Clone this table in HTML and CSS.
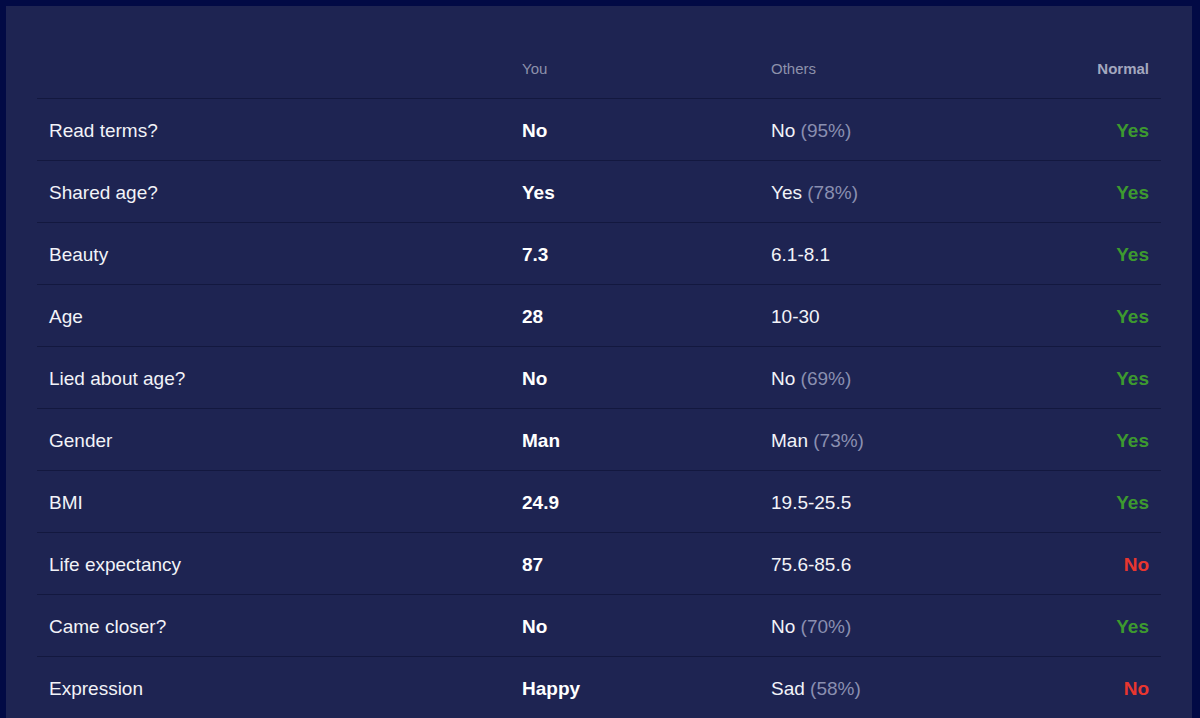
FILE: index.html
```html
<!DOCTYPE html>
<html>
<head>
<meta charset="utf-8">
<link rel="stylesheet" href="styles.css">
</head>
<body>
<div class="frame">
  <div class="panel">
    <div class="table">
      <div class="row head">
        <div class="cell"></div>
        <div class="cell">You</div>
        <div class="cell">Others</div>
        <div class="cell norm">Normal</div>
      </div>
      <div class="row"><div class="cell">Read terms?</div><div class="cell you">No</div><div class="cell">No <span class="pct">(95%)</span></div><div class="cell norm yes">Yes</div></div>
      <div class="row"><div class="cell">Shared age?</div><div class="cell you">Yes</div><div class="cell">Yes <span class="pct">(78%)</span></div><div class="cell norm yes">Yes</div></div>
      <div class="row"><div class="cell">Beauty</div><div class="cell you">7.3</div><div class="cell">6.1-8.1</div><div class="cell norm yes">Yes</div></div>
      <div class="row"><div class="cell">Age</div><div class="cell you">28</div><div class="cell">10-30</div><div class="cell norm yes">Yes</div></div>
      <div class="row"><div class="cell">Lied about age?</div><div class="cell you">No</div><div class="cell">No <span class="pct">(69%)</span></div><div class="cell norm yes">Yes</div></div>
      <div class="row"><div class="cell">Gender</div><div class="cell you">Man</div><div class="cell">Man <span class="pct">(73%)</span></div><div class="cell norm yes">Yes</div></div>
      <div class="row"><div class="cell">BMI</div><div class="cell you">24.9</div><div class="cell">19.5-25.5</div><div class="cell norm yes">Yes</div></div>
      <div class="row"><div class="cell">Life expectancy</div><div class="cell you">87</div><div class="cell">75.6-85.6</div><div class="cell norm no">No</div></div>
      <div class="row"><div class="cell">Came closer?</div><div class="cell you">No</div><div class="cell">No <span class="pct">(70%)</span></div><div class="cell norm yes">Yes</div></div>
      <div class="row"><div class="cell">Expression</div><div class="cell you">Happy</div><div class="cell">Sad <span class="pct">(58%)</span></div><div class="cell norm no">No</div></div>
    </div>
  </div>
</div>
</body>
</html>
```

FILE: styles.css
```css
html, body {
  margin: 0;
  padding: 0;
  height: 100%;
  overflow: hidden;
  background: #020a45;
}
.frame {
  padding: 6px 8px 0 6px;
  height: 100%;
  box-sizing: border-box;
}
.panel {
  background: #1e2452;
  height: 100%;
  padding: 32px 31px 0 31px;
  box-sizing: border-box;
  font-family: "Liberation Sans", Arial, Helvetica, sans-serif;
  color: #f2f3f8;
}
.row {
  display: grid;
  grid-template-columns: 473px 249px 1fr 160px;
  height: 61px;
  align-items: center;
  border-bottom: 1px solid #13183f;
  font-size: 19px;
}
.row .cell {
  padding-top: 2px;
}
.row.head {
  height: 60px;
  font-size: 15px;
  color: #8d91ab;
}
.row.head .cell {
  padding-top: 0;
}
.cell {
  padding: 0 12px;
  white-space: nowrap;
}
.norm {
  text-align: right;
}
.head .norm {
  font-weight: bold;
  color: #a4a8bf;
}
.you {
  font-weight: bold;
  color: #ffffff;
}
.pct {
  color: #8a8fb0;
}
.yes {
  font-weight: bold;
  color: #3d9a2f;
}
.no {
  font-weight: bold;
  color: #e8362f;
}
```
